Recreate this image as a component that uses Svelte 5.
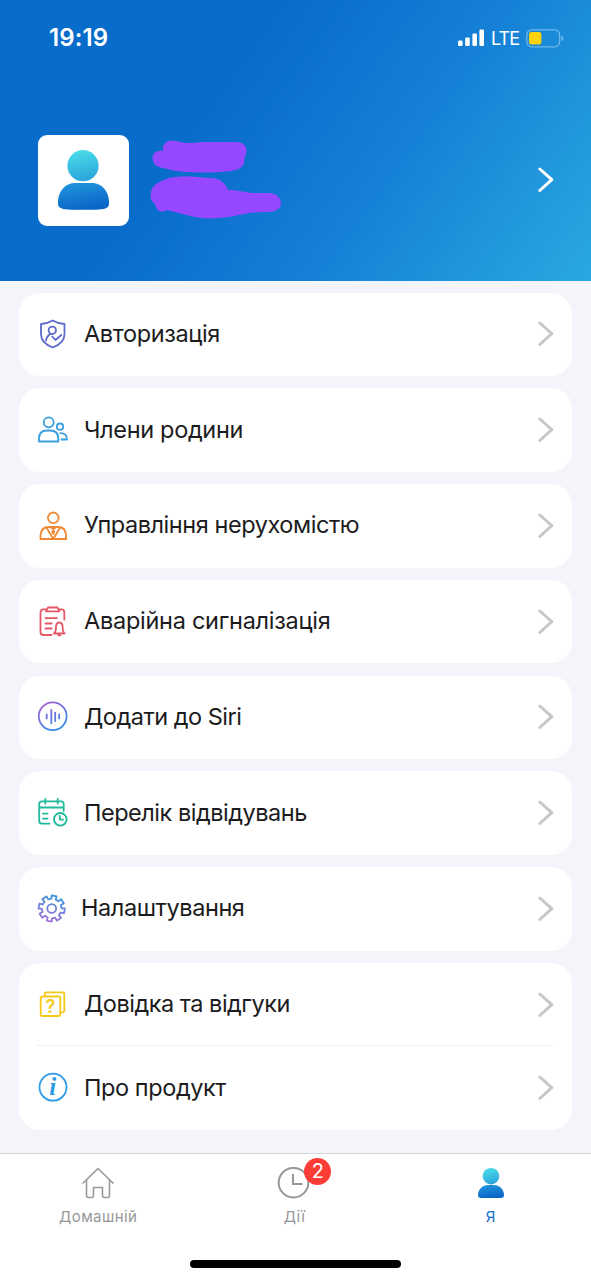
<script lang="ts">
	interface Item {
		icon: string;
		label: string;
		color: string;
		spacing: number;
	}

	const groups: Item[][] = [
		[{ icon: 'shield', label: 'Авторизація', color: '#5d6bcb', spacing: -0.36 }],
		[{ icon: 'family', label: 'Члени родини', color: '#3b9fdf', spacing: -0.33 }],
		[{ icon: 'manager', label: 'Управління нерухомістю', color: '#ee8a35', spacing: -0.44 }],
		[{ icon: 'alarm', label: 'Аварійна сигналізація', color: '#e45764', spacing: -0.27 }],
		[{ icon: 'siri', label: 'Додати до Siri', color: 'url(#violet-down)', spacing: -0.48 }],
		[{ icon: 'visits', label: 'Перелік відвідувань', color: '#20b99d', spacing: -0.48 }],
		[{ icon: 'settings', label: 'Налаштування', color: 'url(#violet-up)', spacing: -0.42 }],
		[
			{ icon: 'help', label: 'Довідка та відгуки', color: '#f5c918', spacing: -0.48 },
			{ icon: 'about', label: 'Про продукт', color: '#2f9be6', spacing: -0.42 }
		]
	];

	// eight-toothed gear around (13.7, 14.5)
	const gear = Array.from({ length: 8 }, (_, i) => {
		const point = (deg: number, r: number) => {
			const a = ((i * 45 + 11 + deg) * Math.PI) / 180;
			return `${(13.7 + r * Math.sin(a)).toFixed(2)} ${(14.5 - r * Math.cos(a)).toFixed(2)}`;
		};
		return [point(-13, 9.8), point(-11, 13.2), point(11, 13.2), point(13, 9.8)].join('L');
	}).join('L');
</script>

{#snippet chevron()}
	<svg class="chevron" width="18" height="28" viewBox="0 0 18 28">
		<path d="M2.800 3 14.800 13.700 2.800 24.500" />
	</svg>
{/snippet}

<main class="screen">
	<header>
		<div class="status">
			<span class="time">19:19</span>
			<svg class="signal" width="27" height="18" viewBox="0 0 27 18">
				<rect x="0" y="11.5" width="4.6" height="5.5" rx="1.2" />
				<rect x="7.2" y="8.5" width="4.6" height="8.5" rx="1.2" />
				<rect x="14.4" y="4.5" width="4.6" height="12.5" rx="1.2" />
				<rect x="21.4" y="0.5" width="4.6" height="16.5" rx="1.2" />
			</svg>
			<span class="network">LTE</span>
			<svg class="battery" width="38" height="19" viewBox="0 0 38 19">
				<rect x="0.8" y="0.8" width="32.8" height="17" rx="5" fill="none" stroke="#70b7eb" stroke-width="1.3" />
				<rect x="3" y="3" width="12.4" height="12.6" rx="2.5" fill="#fbd20b" />
				<path d="M35.4 6.5q2 .7 2 2.9t-2 2.9z" fill="#70b7eb" />
			</svg>
		</div>
		<div class="profile">
			<div class="avatar">
				<svg width="52" height="62" viewBox="0 0 52 62">
					<circle cx="25" cy="15.700" r="15.600" fill="url(#head)" />
					<path d="M0 52C0 41 7.500 33 17 33H34C43.500 33 51 41 51 52V54Q51 59.700 38 59.700H13Q0 59.700 0 54Z" fill="url(#torso)" />
				</svg>
			</div>
			<svg class="scribble" width="132" height="82" viewBox="0 0 132 82">
				<path d="M3 22C1 15 6 11 13 12C12 4 18 0 26 2C36 5 43 4 53 3H84C94 2 98 8 96 15C94 18 95 19 94 24C92 31 83 32 72 33C50 34 31 34 18 30C10 29 4 27 3 22Z" />
				<path d="M1 55C0 45 16 39 25 38C37 36 49 38 58 39C69 38 76 44 78 51C88 51 94 53 102 54H119C126 54 131 59 131 64C131 70 125 73 118 73C99 72 86 78 69 79C51 81 36 76 17 71C11 75 6 71 5 65C1 62 0 59 1 55Z" />
			</svg>
			{@render chevron()}
		</div>
	</header>

	<div class="menu">
		{#each groups as group}
			<section class="card">
				{#each group as item}
					<div class={['row', item.icon]}>
						<svg class="icon" width="30" height="30" viewBox="0 0 30 30" stroke={item.color}>
							{#if item.icon === 'shield'}
								<path d="M14.700 1.500Q20 4.700 26.500 5V15C26.500 22 21.500 26 14.700 28.500C8 26 3 22 3 15V5Q9.500 4.700 14.700 1.500Z" />
								<circle cx="14.300" cy="11.300" r="3.700" />
								<path d="M8 21.500Q8.500 17.800 12 15M14.300 17.500 17.500 21 23.300 16" />
							{:else if item.icon === 'family'}
								<circle cx="10.700" cy="7.300" r="5" />
								<path d="M1 26.500V23.500Q1 15.500 9 15.500H12Q20.300 15.500 20.300 23.500V26.500Z" />
								<circle cx="22" cy="11.700" r="3.200" />
								<path d="M22.300 18.200Q29 18.200 29 24.500H23.300" />
							{:else if item.icon === 'manager'}
								<circle cx="15.300" cy="6.800" r="5.300" />
								<path d="M2.500 28V24.500Q2.800 16 11 16H20Q27.800 16 28.100 24.500V28ZM8.500 16.500 15.300 28 22.100 16.500" />
								<path d="M13.500 17H17.100M15.300 17V21.500M14.200 20.500H16.400L15.300 23Z" />
							{:else if item.icon === 'alarm'}
								<path d="M8 2.300H5.500Q2.500 2.300 2.500 5.300V25Q2.500 28 5.500 28H13.500M21.500 2.300H23.500Q26.300 2.300 26.300 5.300V12.500" />
								<path d="M10 .5H19.500L21.500 4.300H8ZM7.500 11.200H19M7.500 16.500H13.700M7.500 21.500H13.700" />
								<path d="M16 26.500H26.500Q24.700 25 24.700 21Q24.700 15.500 21.300 15.500Q17.900 15.500 17.900 21Q17.900 25 16 26.500ZM20.300 28.300H22.300" />
							{:else if item.icon === 'siri'}
								<circle cx="14.700" cy="14.300" r="13.900" />
								<path d="M8.700 12.400V16.500M13.300 8V21.300M17.200 10.700V19M21.200 12.400V16.500" />
							{:else if item.icon === 'visits'}
								<path d="M25.700 13V6Q25.700 3.300 23 3.300H4Q1.200 3.300 1.200 6V23Q1.200 25.700 4 25.700H11.500M1.200 9.500H25.700M7.300 1V5.700M19.700 1V5.700M5 15.700H9.500M5 20.700H9.500" />
								<circle cx="22.300" cy="21.300" r="6.300" />
								<path d="M21.800 17.800V21.700H25" />
							{:else if item.icon === 'settings'}
								<path d="M{gear}Z" />
								<circle cx="13.700" cy="14.500" r="4.400" />
							{:else if item.icon === 'help'}
								<rect x="2.700" y="6.500" width="19.600" height="19.500" rx="1.500" />
								<path d="M6.800 6V3.800Q6.800 2.300 8.300 2.300H24.800Q26.300 2.300 26.300 3.800V20.800Q26.300 22.300 24.800 22.300H22.500" />
								<text x="12.500" y="22.500" font-size="18" fill={item.color}>?</text>
							{:else}
								<circle cx="15" cy="14.200" r="13.500" />
								<text class="serif" x="14.700" y="22.300" font-size="25" fill={item.color}>i</text>
							{/if}
						</svg>
						<span class="label" style="letter-spacing: {item.spacing}px">{item.label}</span>
						{@render chevron()}
					</div>
				{/each}
			</section>
		{/each}
	</div>

	<nav>
		<div class="tab">
			<svg width="34" height="32" viewBox="0 0 34 32">
				<path d="M1.500 16.500 17 1.500 32.500 16.500M5.500 13V28.500Q5.500 30.500 7.500 30.500H10.500Q12.500 30.500 12.500 28.500V20.500H21.500V28.500Q21.500 30.500 23.500 30.500H26.500Q28.500 30.500 28.500 28.500V13" />
			</svg>
			<span>Домашній</span>
		</div>
		<div class="tab">
			<svg class="clock" width="34" height="32" viewBox="0 0 34 32">
				<circle cx="16.500" cy="15.700" r="14.800" />
				<path d="M16 7V17H25.500" />
			</svg>
			<b class="badge">2</b>
			<span>Дії</span>
		</div>
		<div class="tab active">
			<svg class="me" width="34" height="32" viewBox="0 0 34 32">
				<circle cx="17" cy="9.200" r="8.300" fill="url(#head)" />
				<path d="M4 28C4 22 9 18 14 18H20C25 18 30 22 30 28Q30 31 27 31H7Q4 31 4 28Z" fill="url(#torso)" />
			</svg>
			<span>Я</span>
		</div>
		<div class="indicator"></div>
	</nav>

	<svg class="defs" width="0" height="0">
		<defs>
			<linearGradient id="head" x2="0.2" y2="1">
				<stop offset="0" stop-color="#4be0ea" />
				<stop offset="1" stop-color="#2ea7dc" />
			</linearGradient>
			<linearGradient id="torso" x2="0.3" y2="1">
				<stop offset="0" stop-color="#2298df" />
				<stop offset="1" stop-color="#0b67c7" />
			</linearGradient>
			<linearGradient id="violet-down" gradientUnits="userSpaceOnUse" x1="8" y1="2" x2="22" y2="27">
				<stop offset="0" stop-color="#9a63d3" />
				<stop offset="1" stop-color="#318fe5" />
			</linearGradient>
			<linearGradient id="violet-up" gradientUnits="userSpaceOnUse" x1="18" y1="1" x2="10" y2="28">
				<stop offset="0" stop-color="#3593dc" />
				<stop offset="1" stop-color="#a772d8" />
			</linearGradient>
		</defs>
	</svg>
</main>

<style>
	:global(body) {
		margin: 0;
	}

	.screen {
		display: flex;
		flex-direction: column;
		width: 591px;
		height: 1280px;
		overflow: hidden;
		background: #f4f5fb;
		font-family: Inter, 'Liberation Sans', sans-serif;
	}

	svg {
		display: block;
		flex: none;
	}

	header {
		flex: none;
		box-sizing: border-box;
		height: 280.5px;
		padding-top: 22px;
		background: linear-gradient(126deg, #086ccb 0%, #086ccb 37%, #1580d6 64%, #2aa8e1 100%);
		color: white;
	}

	.status {
		display: flex;
		align-items: center;
		height: 32px;
		padding: 0 27px 0 49px;
	}

	.time {
		flex: 1;
		margin-top: -2px;
		font-size: 24px;
		font-weight: 600;
		letter-spacing: 0.1px;
	}

	.signal {
		fill: white;
		margin-right: 6px;
	}

	.network {
		width: 35px;
		font-size: 18px;
		letter-spacing: -0.9px;
	}

	.profile {
		display: flex;
		align-items: center;
		margin-top: 81px;
		padding: 0 36px 0 38px;
	}

	.avatar {
		display: flex;
		align-items: flex-start;
		justify-content: center;
		box-sizing: border-box;
		width: 91px;
		height: 90.500px;
		padding-top: 15px;
		border-radius: 9px;
		background: white;
	}

	.scribble {
		margin: 0 auto 0 21px;
		fill: #9648ff;
	}

	.chevron {
		fill: none;
		stroke: #c7c7c9;
		stroke-width: 3;
		stroke-linecap: round;
		stroke-linejoin: round;
	}

	.profile .chevron {
		stroke: white;
	}

	.menu {
		display: flex;
		flex: 1;
		flex-direction: column;
		gap: 12.250px;
		padding: 12px 19px 0;
	}

	.card {
		border-radius: 21px;
		background: white;
	}

	.row {
		display: flex;
		align-items: center;
		height: 83.500px;
		padding: 0 17px 0 19px;
	}

	.row + .row {
		position: relative;
	}

	.row + .row::before {
		content: '';
		position: absolute;
		top: -1px;
		left: 18px;
		right: 19px;
		height: 1px;
		background: #f0f0f3;
	}

	.icon {
		fill: none;
		stroke-width: 1.800;
		stroke-linecap: round;
		stroke-linejoin: round;
		overflow: visible;
	}

	.icon text {
		stroke: none;
		font-weight: 600;
		text-anchor: middle;
	}

	.icon .serif {
		font-family: 'Liberation Serif', serif;
		font-style: italic;
		font-weight: 700;
	}

	.label {
		flex: 1;
		margin: -2px 0 0 16px;
		color: #1c1c1e;
		font-size: 23.500px;
		white-space: nowrap;
	}

	.settings .label {
		margin-left: 13px;
	}

	nav {
		position: relative;
		display: grid;
		flex: none;
		grid-template-columns: repeat(3, 1fr);
		box-sizing: border-box;
		height: 127px;
		padding: 13px 2px 0 0;
		border-top: 1px solid #d4d4d8;
		background: white;
	}

	.tab {
		position: relative;
		display: flex;
		flex-direction: column;
		align-items: center;
		color: #97979a;
		font-size: 15px;
		letter-spacing: 0.4px;
		line-height: 20px;
	}

	.tab svg {
		margin-bottom: 8px;
		fill: none;
		stroke: #98989b;
		stroke-width: 1.600;
	}

	.tab .clock {
		stroke-width: 2;
	}

	.tab .me {
		stroke: none;
	}

	.active {
		color: #1271cb;
	}

	.badge {
		position: absolute;
		top: -9px;
		left: 108px;
		width: 27px;
		height: 27px;
		border-radius: 50%;
		background: #fc3d35;
		color: white;
		font-size: 20px;
		font-weight: 400;
		letter-spacing: 0;
		line-height: 27px;
		text-align: center;
	}

	.indicator {
		position: absolute;
		bottom: 12px;
		left: 190px;
		width: 211px;
		height: 8px;
		border-radius: 4px;
		background: black;
	}

	.defs {
		position: absolute;
	}
</style>
